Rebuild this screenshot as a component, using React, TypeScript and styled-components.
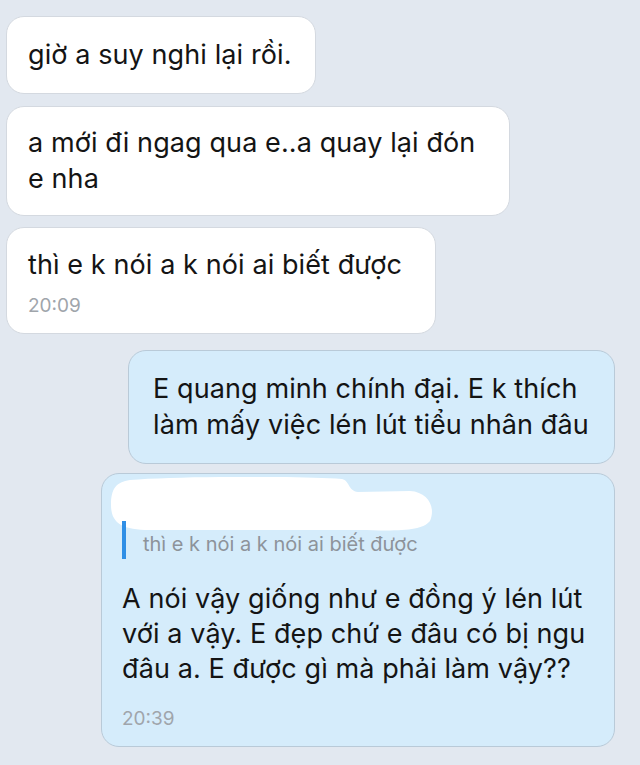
import React from 'react';
import styled, { createGlobalStyle } from 'styled-components';

const Global = createGlobalStyle`
  html, body { margin: 0; padding: 0; background: #e2e8f0; }
  body { font-family: Inter, "Noto Sans", sans-serif; -webkit-font-smoothing: antialiased; }
`;

const Screen = styled.div`
  width: 640px;
  height: 765px;
  overflow: hidden;
  box-sizing: border-box;
  background: #e2e8f0;
  padding: 16px 25px 0 6px;
  display: flex;
  flex-direction: column;
`;

const Row = styled.div<{ $out?: boolean; $gap: number }>`
  display: flex;
  justify-content: ${(p) => (p.$out ? 'flex-end' : 'flex-start')};
  margin-top: ${(p) => p.$gap}px;
`;

const Bubble = styled.div<{ $out?: boolean; $w: number; $pt: number; $pb: number; $pl: number }>`
  width: ${(p) => p.$w}px;
  box-sizing: border-box;
  background: ${(p) => (p.$out ? '#d5ecfb' : '#ffffff')};
  border: 1px solid ${(p) => (p.$out ? '#b9cad8' : '#d4d9e0')};
  border-radius: 18px;
  padding: ${(p) => `${p.$pt}px 10px ${p.$pb}px ${p.$pl}px`};
  display: flex;
  flex-direction: column;
`;

const Text = styled.div`
  font-size: 27px;
  line-height: 36px;
  color: #141414;
  white-space: nowrap;
  letter-spacing: 0.1px;
`;

const Time = styled.div<{ $mt: number }>`
  margin-top: ${(p) => p.$mt}px;
  font-size: 19px;
  line-height: 26px;
  color: #a0a5ab;
`;

const Redaction = styled.svg`
  display: block;
  margin-left: -12px;
  width: 323px;
  height: 54px;
`;

const Quote = styled.div`
  margin-top: -10px;
  border-left: 4px solid #2f8fe6;
  padding: 8px 0 0 17px;
  height: 38px;
  box-sizing: border-box;
  font-size: 20px;
  line-height: 30px;
  color: #8d939a;
  white-space: nowrap;
`;

const MainText = styled(Text)`
  margin-top: 22px;
  line-height: 35px;
`;

export default function App() {
  return (
    <>
      <Global />
      <Screen>
        <Row $gap={0}>
          <Bubble $w={310} $pt={20} $pb={20} $pl={21}>
            <Text>giờ a suy nghi lại rồi.</Text>
          </Bubble>
        </Row>
        <Row $gap={12}>
          <Bubble $w={504} $pt={18} $pb={18} $pl={21}>
            <Text>
              a mới đi ngag qua e..a quay lại đón
              <br />e nha
            </Text>
          </Bubble>
        </Row>
        <Row $gap={11}>
          <Bubble $w={430} $pt={19} $pb={14} $pl={21}>
            <Text>thì e k nói a k nói ai biết được</Text>
            <Time $mt={10}>20:09</Time>
          </Bubble>
        </Row>
        <Row $out $gap={16}>
          <Bubble $out $w={487} $pt={20} $pb={20} $pl={24}>
            <Text>
              E quang minh chính đại. E k thích
              <br />
              làm mấy việc lén lút tiểu nhân đâu
            </Text>
          </Bubble>
        </Row>
        <Row $out $gap={9}>
          <Bubble $out $w={514} $pt={3} $pb={14} $pl={20}>
            <Redaction viewBox="0 0 323 54">
              <path
                d="M20 3 C70 -1 190 -1 232 2 C240 4 238 14 248 15 L300 14 C318 15 326 30 320 44 C312 54 290 54 250 53 L40 53 C12 53 1 46 1 28 C1 12 6 5 20 3 Z"
                fill="#ffffff"
              />
            </Redaction>
            <Quote>thì e k nói a k nói ai biết được</Quote>
            <MainText>
              A nói vậy giống như e đồng ý lén lút
              <br />
              với a vậy. E đẹp chứ e đâu có bị ngu
              <br />
              đâu a. E được gì mà phải làm vậy??
            </MainText>
            <Time $mt={20}>20:39</Time>
          </Bubble>
        </Row>
      </Screen>
    </>
  );
}
